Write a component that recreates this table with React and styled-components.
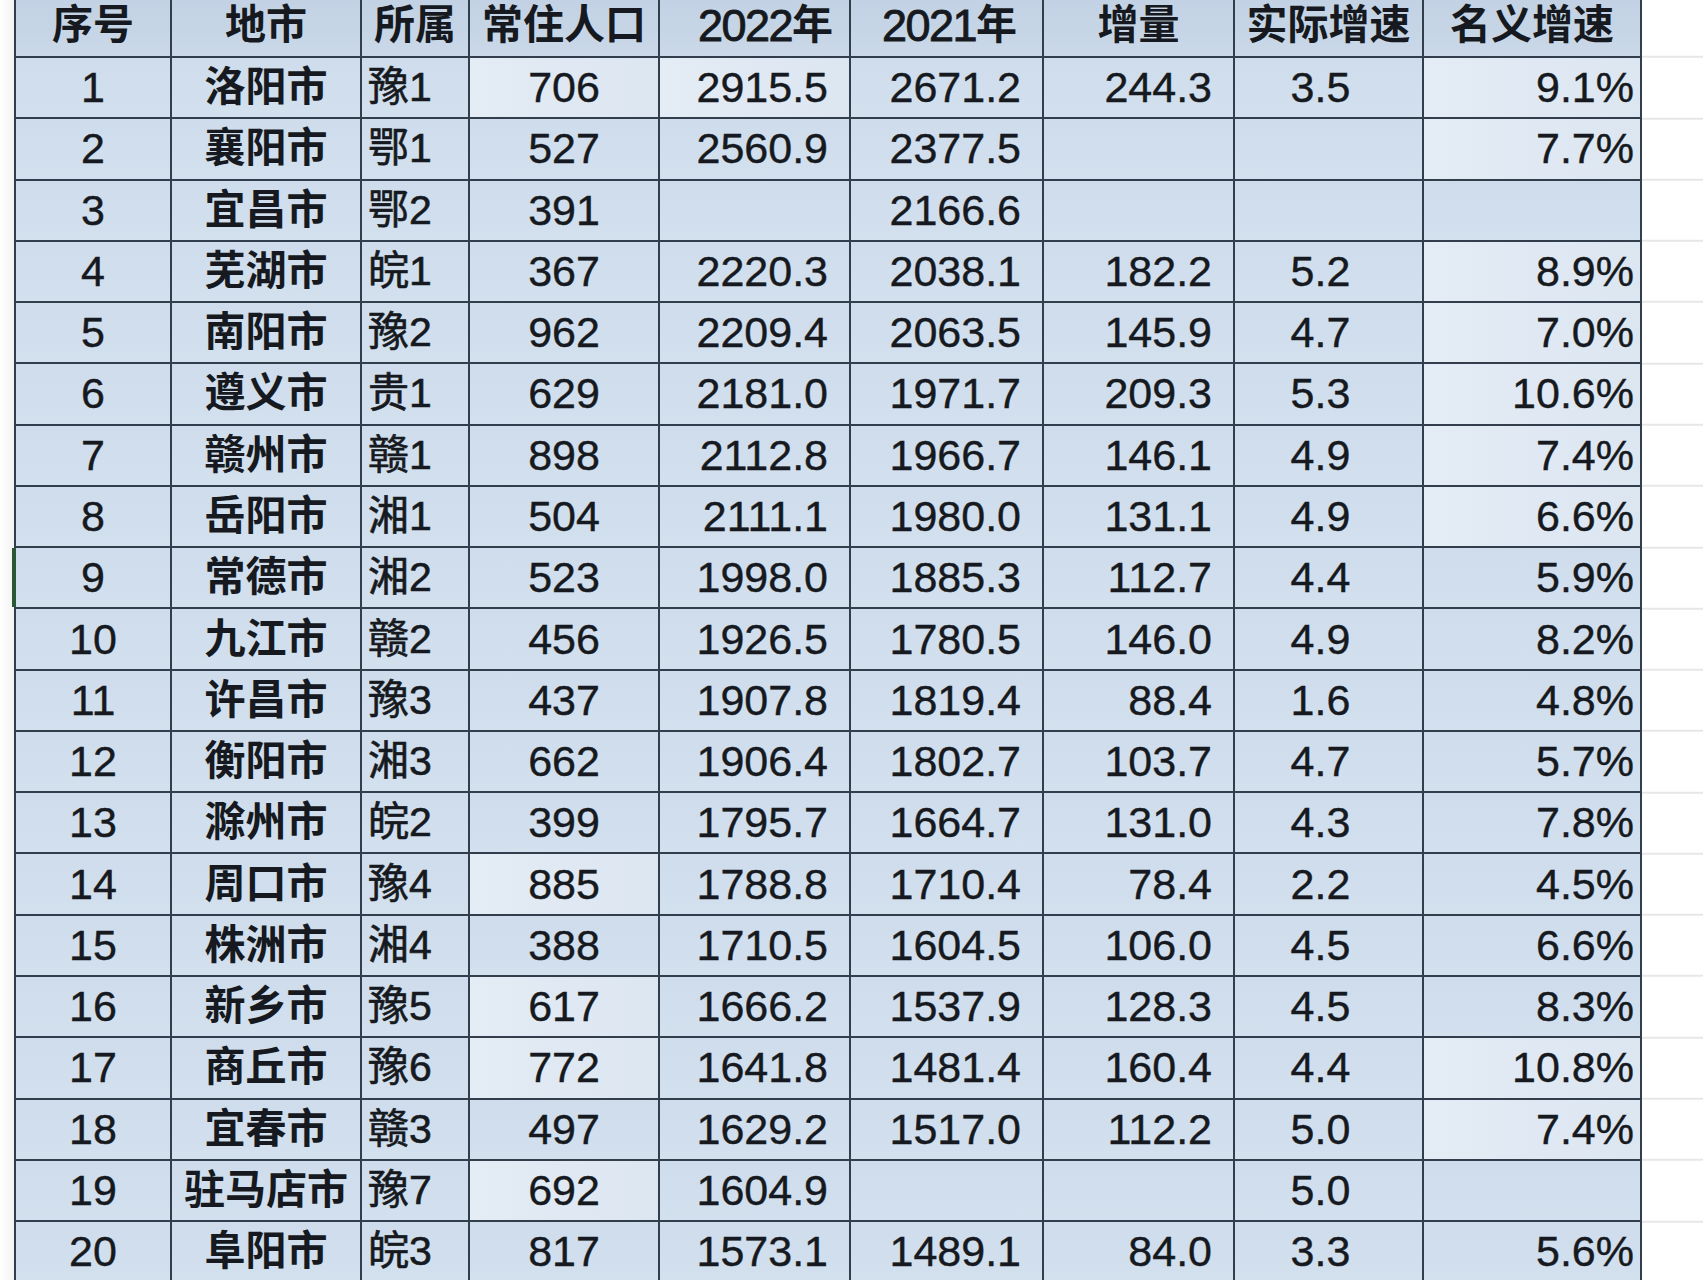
import React from "react";
import styled, { createGlobalStyle, css } from "styled-components";

const Global = createGlobalStyle`
  html, body { margin: 0; padding: 0; background: #ffffff; overflow: hidden; }
  #root { height: 1280px; overflow: hidden; }
`;

const Page = styled.div`
  display: flex;
  height: 1280px;
  overflow: hidden;
  background: #ffffff;
`;

const Gutter = styled.div`
  width: 14px;
  flex: none;
  background: linear-gradient(to right, #ffffff, #f3f3f3);
`;

const Sheet = styled.div`
  flex: none;
  display: grid;
  grid-template-columns: 154px 188px 106px 188px 189px 191px 189px 187px 216px;
  grid-template-rows: 56px repeat(20, 59.28px);
  gap: 2px;
  padding: 0 2px 2px 2px;
  background: #323e4b;
  align-self: flex-start;
`;

const Filler = styled.div`
  flex: 1;
  background: repeating-linear-gradient(
    to bottom,
    #ffffff 0,
    #ffffff 59.28px,
    #e7e7e7 59.28px,
    #e7e7e7 61.28px
  );
  background-position: 0 -3.28px;
`;

const Row = styled.div`
  display: contents;
`;

const cellBase = css`
  display: flex;
  align-items: center;
  line-height: 1;
  color: #161a20;
  white-space: nowrap;
  overflow: visible;
  box-sizing: border-box;
  font-family: "Liberation Sans", "Noto Sans CJK SC", sans-serif;
`;

const HeadCell = styled.div`
  ${cellBase};
  justify-content: center;
  padding-bottom: 6px;
  padding-left: ${(p) => p.$shift || 0}px;
  background: linear-gradient(to bottom, #c2d2e4, #cad8e8);
  font-size: 41px;
  font-weight: 700;
`;

const YearSpan = styled.span`
  font-weight: 400;
  font-size: 45px;
  letter-spacing: -1.5px;
  -webkit-text-stroke: 0.9px currentColor;
`;

const Cell = styled.div`
  ${cellBase};
  background: ${(p) =>
    p.$light
      ? "linear-gradient(to right, #e4ecf5, #dce6f1)"
      : "linear-gradient(to bottom, #cedcec, #d3e0ee)"};
  justify-content: ${(p) =>
    p.$align === "left" ? "flex-start" : p.$align === "right" ? "flex-end" : "center"};
  padding-left: ${(p) => p.$padL || 0}px;
  padding-right: ${(p) => p.$padR || 0}px;
  font-size: ${(p) => (p.$kind === "num" ? 43 : 41)}px;
  font-weight: ${(p) => (p.$bold ? 700 : 400)};
  -webkit-text-stroke: ${(p) => (p.$bold ? 0 : p.$kind === "num" ? 0.4 : 0.6)}px currentColor;
  ${(p) =>
    p.$selected &&
    css`
      box-shadow: -4px 0 0 #2a5836;
    `}
`;

const headers = [
  { text: "序号" },
  { text: "地市" },
  { text: "所属" },
  { text: "常住人口" },
  { year: "2022", shift: 22 },
  { year: "2021", shift: 6 },
  { text: "增量" },
  { text: "实际增速" },
  { text: "名义增速" },
];

const data = [
  [1, "洛阳市", "豫1", "706", "2915.5", "2671.2", "244.3", "3.5", "9.1%"],
  [2, "襄阳市", "鄂1", "527", "2560.9", "2377.5", "", "", "7.7%"],
  [3, "宜昌市", "鄂2", "391", "", "2166.6", "", "", ""],
  [4, "芜湖市", "皖1", "367", "2220.3", "2038.1", "182.2", "5.2", "8.9%"],
  [5, "南阳市", "豫2", "962", "2209.4", "2063.5", "145.9", "4.7", "7.0%"],
  [6, "遵义市", "贵1", "629", "2181.0", "1971.7", "209.3", "5.3", "10.6%"],
  [7, "赣州市", "赣1", "898", "2112.8", "1966.7", "146.1", "4.9", "7.4%"],
  [8, "岳阳市", "湘1", "504", "2111.1", "1980.0", "131.1", "4.9", "6.6%"],
  [9, "常德市", "湘2", "523", "1998.0", "1885.3", "112.7", "4.4", "5.9%"],
  [10, "九江市", "赣2", "456", "1926.5", "1780.5", "146.0", "4.9", "8.2%"],
  [11, "许昌市", "豫3", "437", "1907.8", "1819.4", "88.4", "1.6", "4.8%"],
  [12, "衡阳市", "湘3", "662", "1906.4", "1802.7", "103.7", "4.7", "5.7%"],
  [13, "滁州市", "皖2", "399", "1795.7", "1664.7", "131.0", "4.3", "7.8%"],
  [14, "周口市", "豫4", "885", "1788.8", "1710.4", "78.4", "2.2", "4.5%"],
  [15, "株洲市", "湘4", "388", "1710.5", "1604.5", "106.0", "4.5", "6.6%"],
  [16, "新乡市", "豫5", "617", "1666.2", "1537.9", "128.3", "4.5", "8.3%"],
  [17, "商丘市", "豫6", "772", "1641.8", "1481.4", "160.4", "4.4", "10.8%"],
  [18, "宜春市", "赣3", "497", "1629.2", "1517.0", "112.2", "5.0", "7.4%"],
  [19, "驻马店市", "豫7", "692", "1604.9", "", "", "5.0", ""],
  [20, "阜阳市", "皖3", "817", "1573.1", "1489.1", "84.0", "3.3", "5.6%"],
];

const lightCells = {
  1: [3, 4, 8],
  2: [8],
  4: [8],
  5: [8],
  6: [8],
  7: [8],
  8: [8],
  14: [3],
  16: [3],
  17: [3, 8],
  18: [8],
  19: [3],
};

const colSpec = [
  { kind: "num", align: "center" },
  { kind: "cjk", align: "center", bold: true },
  { kind: "cjk", align: "left", padL: 6 },
  { kind: "num", align: "center" },
  { kind: "num", align: "right", padR: 21 },
  { kind: "num", align: "right", padR: 21 },
  { kind: "num", align: "right", padR: 21 },
  { kind: "num", align: "center", padR: 16 },
  { kind: "num", align: "right", padR: 6 },
];

export default function App() {
  return (
    <>
      <Global />
      <Page>
        <Gutter />
        <Sheet>
          <Row>
            {headers.map((h, i) => (
              <HeadCell key={i} $shift={h.shift}>
                {h.text ? (
                  h.text
                ) : (
                  <>
                    <YearSpan>{h.year}</YearSpan>年
                  </>
                )}
              </HeadCell>
            ))}
          </Row>
          {data.map((row) => {
            const lit = lightCells[row[0]] || [];
            return (
              <Row key={row[0]}>
                {row.map((v, ci) => {
                  const s = colSpec[ci];
                  return (
                    <Cell
                      key={ci}
                      $kind={s.kind}
                      $align={s.align}
                      $bold={s.bold}
                      $padL={s.padL}
                      $padR={s.padR}
                      $light={lit.includes(ci)}
                      $selected={ci === 0 && row[0] === 9}
                    >
                      {v}
                    </Cell>
                  );
                })}
              </Row>
            );
          })}
        </Sheet>
        <Filler />
      </Page>
    </>
  );
}
